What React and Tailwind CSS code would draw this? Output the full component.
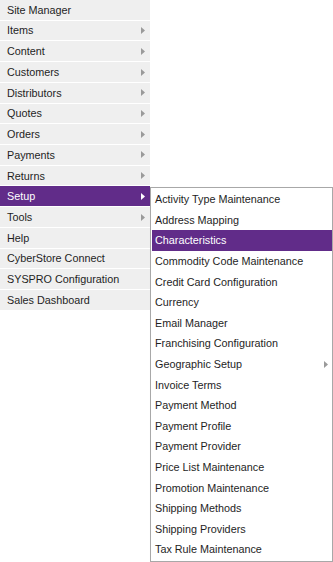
import React from "react";

const left = [
  ["Site Manager", false],
  ["Items", true],
  ["Content", true],
  ["Customers", true],
  ["Distributors", true],
  ["Quotes", true],
  ["Orders", true],
  ["Payments", true],
  ["Returns", true],
  ["Setup", true],
  ["Tools", true],
  ["Help", false],
  ["CyberStore Connect", false],
  ["SYSPRO Configuration", false],
  ["Sales Dashboard", false],
];

const sub = [
  ["Activity Type Maintenance", false],
  ["Address Mapping", false],
  ["Characteristics", false],
  ["Commodity Code Maintenance", false],
  ["Credit Card Configuration", false],
  ["Currency", false],
  ["Email Manager", false],
  ["Franchising Configuration", false],
  ["Geographic Setup", true],
  ["Invoice Terms", false],
  ["Payment Method", false],
  ["Payment Profile", false],
  ["Payment Provider", false],
  ["Price List Maintenance", false],
  ["Promotion Maintenance", false],
  ["Shipping Methods", false],
  ["Shipping Providers", false],
  ["Tax Rule Maintenance", false],
];

function Arrow({ white }) {
  return (
    <svg width="4" height="7" viewBox="0 0 4 7" className="shrink-0">
      <path d="M0 0 L4 3.5 L0 7 Z" fill={white ? "#ffffff" : "#9a9a9a"} />
    </svg>
  );
}

export default function App() {
  return (
    <div
      className="relative w-[333px] h-[562px] bg-white text-[10.8px] text-[#1e1e1e]"
      style={{ fontFamily: '"Liberation Sans", Arial, sans-serif' }}
    >
      <div className="flex flex-col w-[150px] bg-[#efefef]">
        {left.map(([label, arrow]) => {
          const active = label === "Setup";
          return (
            <div
              key={label}
              className={`flex items-center justify-between h-[20.73px] border-b border-white pl-[7px] pr-[5px] ${
                active ? "bg-[#612c89] text-white" : ""
              }`}
            >
              <span>{label}</span>
              {arrow && <Arrow white={active} />}
            </div>
          );
        })}
      </div>
      <div className="absolute left-[150px] top-[187px] w-[183px] h-[375px] bg-white border border-[#a8a8a8] p-px pr-0 flex flex-col shadow-[1px_1px_2px_rgba(0,0,0,0.08)]">
        {sub.map(([label, arrow]) => {
          const active = label === "Characteristics";
          return (
            <div
              key={label}
              className={`flex items-center justify-between h-[20.6px] pl-[3px] pr-[4px] ${
                active ? "bg-[#612c89] text-white" : ""
              }`}
            >
              <span>{label}</span>
              {arrow && <Arrow />}
            </div>
          );
        })}
      </div>
    </div>
  );
}
